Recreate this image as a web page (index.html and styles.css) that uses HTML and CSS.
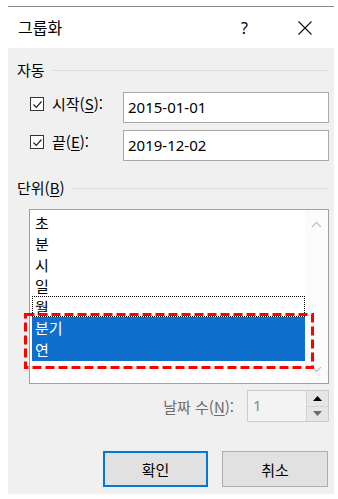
FILE: index.html
```html
<!DOCTYPE html>
<html lang="ko">
<head>
<meta charset="utf-8">
<link rel="stylesheet" href="styles.css">
</head>
<body>
<div class="topline"></div>
<div class="titlebar">
  <span class="title">그룹화</span>
  <span class="help">?</span>
  <svg class="close" width="14" height="14" viewBox="0 0 14 14"><path d="M0.5 0.5 L13.5 13.5 M13.5 0.5 L0.5 13.5" stroke="#111" stroke-width="1.1" fill="none"/></svg>
</div>
<div class="content">
  <div class="group-head g1"><span>자동</span><div class="rule"></div></div>
  <div class="row r1">
    <div class="chk-label">
      <span class="checkbox"><svg width="11" height="11" viewBox="0 0 11 11"><path d="M1.5 5.5 L4.3 8.3 L9.5 2.5" stroke="#222" stroke-width="1.2" fill="none"/></svg></span>
      <span class="lbl">시작(<u>S</u>):</span>
    </div>
    <div class="field">2015-01-01</div>
  </div>
  <div class="row r2">
    <div class="chk-label">
      <span class="checkbox"><svg width="11" height="11" viewBox="0 0 11 11"><path d="M1.5 5.5 L4.3 8.3 L9.5 2.5" stroke="#222" stroke-width="1.2" fill="none"/></svg></span>
      <span class="lbl">끝(<u>E</u>):</span>
    </div>
    <div class="field">2019-12-02</div>
  </div>
  <div class="group-head g2"><span>단위(<u>B</u>)</span><div class="rule"></div></div>
  <div class="listbox">
    <div class="items">
      <div class="item">초</div>
      <div class="item">분</div>
      <div class="item">시</div>
      <div class="item">일</div>
      <div class="item focus">월</div>
      <div class="item sel">분기</div>
      <div class="item sel">연</div>
    </div>
    <div class="scrollbar">
      <svg width="11" height="7" viewBox="0 0 11 7"><path d="M1 6 L5.5 1.5 L10 6" stroke="#c4c4c4" stroke-width="1.4" fill="none"/></svg>
      <svg width="11" height="7" viewBox="0 0 11 7"><path d="M1 1 L5.5 5.5 L10 1" stroke="#c4c4c4" stroke-width="1.4" fill="none"/></svg>
    </div>
    <svg class="highlight" width="290" height="56" viewBox="0 0 290 56"><rect x="1.5" y="1.5" width="287" height="53" fill="none" stroke="#ff0000" stroke-width="3" stroke-dasharray="9 4"/></svg>
  </div>
  <div class="spin-row">
    <span class="spin-label">날짜 수(<u>N</u>):</span>
    <div class="spin">
      <div class="spin-value">1</div>
      <div class="spin-btns">
        <div class="sbtn"><svg width="9" height="5" viewBox="0 0 9 5"><path d="M0 5 L4.5 0 L9 5 Z" fill="#000"/></svg></div>
        <div class="sbtn"><svg width="9" height="5" viewBox="0 0 9 5"><path d="M0 0 L9 0 L4.5 5 Z" fill="#6d6d6d"/></svg></div>
      </div>
    </div>
  </div>
  <div class="buttons">
    <div class="btn primary">확인</div>
    <div class="btn">취소</div>
  </div>
</div>
</body>
</html>
```

FILE: styles.css
```css
html, body {
  margin: 0;
  padding: 0;
  background: #ffffff;
}
body {
  font-family: "Noto Sans", "Noto Sans CJK KR", sans-serif;
  font-size: 15px;
  color: #000;
}
u { text-decoration: underline; text-underline-offset: 2px; }
.topline {
  margin: 6px 0 0 8px;
  width: 326px;
  height: 1px;
  background: #858a91;
}
.titlebar {
  margin-left: 8px;
  width: 326px;
  height: 41px;
  background: #fff;
  display: flex;
  align-items: center;
  position: relative;
}
.title {
  font-family: "Noto Sans CJK KR", sans-serif;
  font-size: 16px;
  margin-left: 10px;
  margin-top: -1px;
}
.help {
  margin-left: auto;
  font-size: 16px;
  margin-right: 50px;
}
.close {
  margin-right: 22px;
}
.content {
  margin-left: 8px;
  width: 326px;
  height: 446px;
  background: #f0f0f0;
  padding-top: 12px;
  box-sizing: border-box;
}
.group-head {
  display: flex;
  align-items: center;
  height: 20px;
  padding-left: 9px;
  padding-right: 6px;
  line-height: 20px;
}
.group-head span {
  font-family: "Noto Sans CJK KR", "Noto Sans", sans-serif;
}
.rule {
  flex: 1;
  height: 1px;
  background: #dcdcdc;
  margin-left: 7px;
}
.row {
  display: flex;
  height: 31px;
  padding-left: 22px;
}
.r1 { margin-top: 12px; }
.r2 { margin-top: 7px; }
.chk-label {
  width: 93px;
  display: flex;
  align-items: center;
  height: 24px;
}
.checkbox {
  width: 14px;
  height: 14px;
  box-sizing: border-box;
  border: 1px solid #333;
  background: #fff;
  display: flex;
  align-items: center;
  justify-content: center;
  flex: none;
}
.checkbox svg { display: block; }
.lbl {
  margin-left: 8px;
  font-family: "Noto Sans CJK KR", "Noto Sans", sans-serif;
  line-height: 20px;
}
.field {
  width: 206px;
  height: 31px;
  box-sizing: border-box;
  border: 1px solid #a9a9a9;
  background: #fff;
  padding-left: 4px;
  line-height: 28px;
}
.g2 { margin-top: 17px; }
.listbox {
  margin: 11px 0 0 21px;
  width: 300px;
  height: 175px;
  box-sizing: border-box;
  border: 1px solid #a0a0a0;
  background: #fff;
  display: flex;
  position: relative;
  padding: 2px 0 2px 2px;
}
.items {
  flex: 1;
}
.item {
  height: 21px;
  line-height: 21px;
  padding-left: 3px;
  font-family: "Noto Sans CJK KR", sans-serif;
  box-sizing: border-box;
}
.item.focus {
  outline: 1px dotted #000;
  outline-offset: -1px;
}
.item.sel {
  background: #0e6fcd;
  color: #fff;
  height: 22px;
  line-height: 22px;
}
.scrollbar {
  width: 23px;
  background: #fbfbfb;
  margin: -2px 0 -2px 0;
  display: flex;
  flex-direction: column;
  justify-content: space-between;
  align-items: center;
  padding: 11px 0 10px;
  box-sizing: border-box;
}
.scrollbar svg { display: block; }
.highlight {
  position: absolute;
  left: -6px;
  top: 103px;
  display: block;
}
.spin-row {
  display: flex;
  align-items: center;
  justify-content: flex-end;
  margin-top: 6px;
  padding-right: 5px;
  height: 32px;
}
.spin-label {
  color: #6d6d6d;
  font-family: "Noto Sans CJK KR", "Noto Sans", sans-serif;
  margin-right: 13px;
}
.spin {
  width: 82px;
  height: 32px;
  box-sizing: border-box;
  border: 1px solid #cccccc;
  background: #f3f3f3;
  display: flex;
}
.spin-value {
  flex: 1;
  color: #8a8a8a;
  padding-left: 5px;
  line-height: 28px;
}
.spin-btns {
  width: 22px;
  display: flex;
  flex-direction: column;
}
.sbtn {
  flex: 1;
  background: #e6e6e6;
  border-left: 1px solid #d4d4d4;
  display: flex;
  align-items: center;
  justify-content: center;
}
.sbtn + .sbtn { border-top: 1px solid #d4d4d4; }
.sbtn svg { display: block; }
.buttons {
  display: flex;
  gap: 14px;
  margin-top: 29px;
  padding-left: 95px;
}
.btn {
  width: 106px;
  height: 36px;
  box-sizing: border-box;
  border: 1px solid #adadad;
  background: #e1e1e1;
  display: flex;
  align-items: center;
  justify-content: center;
  font-family: "Noto Sans CJK KR", sans-serif;
}
.btn.primary {
  width: 105px;
  border: 2px solid #0078d7;
}
```
